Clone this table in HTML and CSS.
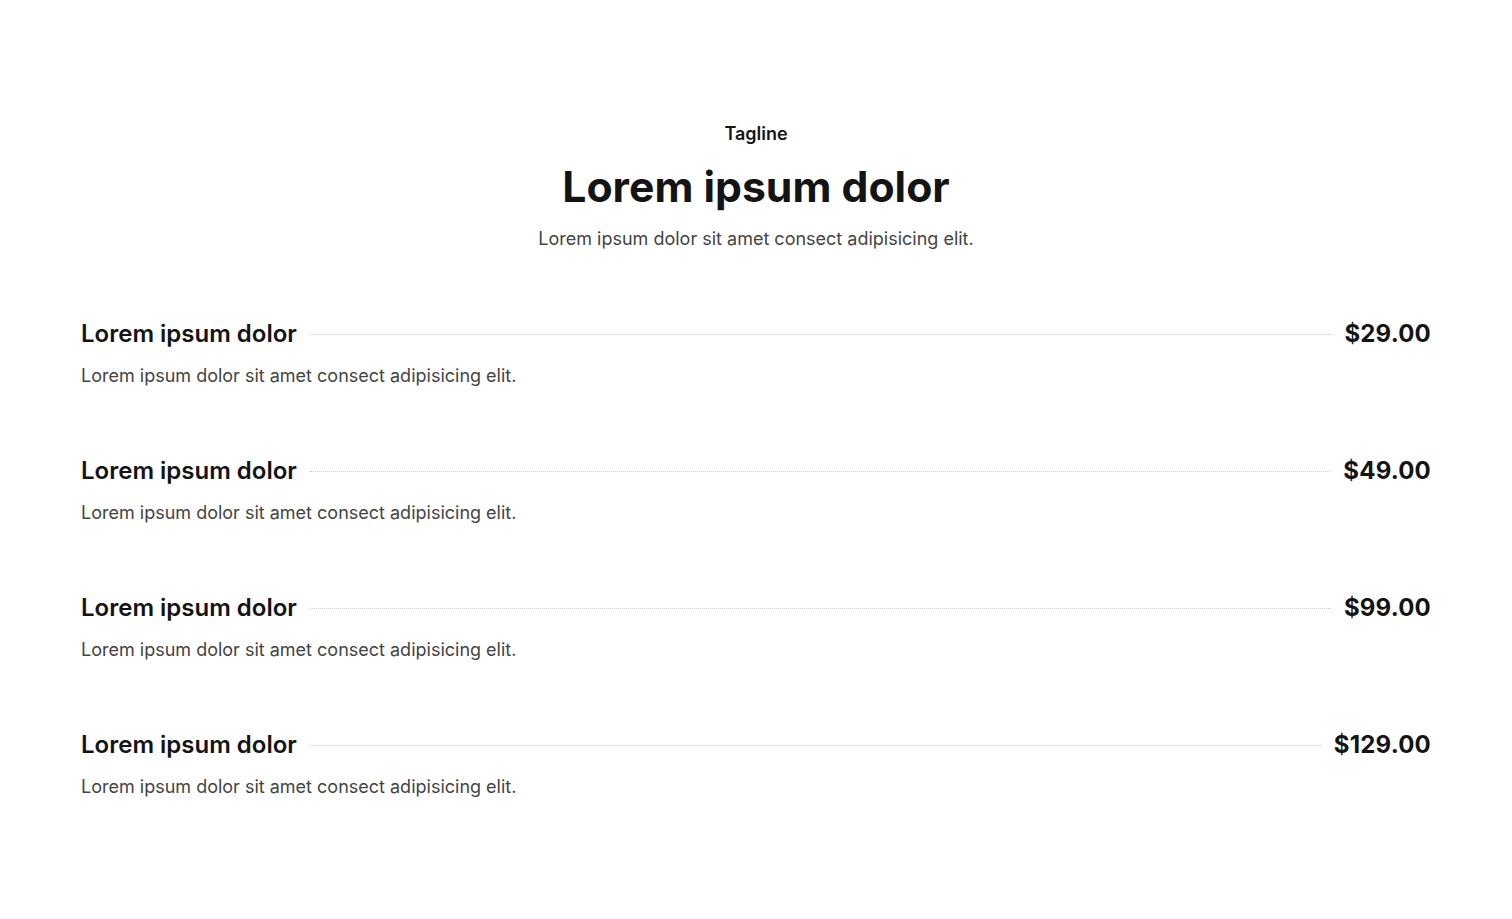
FILE: index.html
```html
<!DOCTYPE html>
<html lang="en">
<head>
    <meta charset="UTF-8">
    <meta name="viewport" content="width=device-width, initial-scale=1.0">
    <title>Pricing List</title>
    <link rel="stylesheet" href="styles.css">
</head>
<body>
    <section class="pricing">
        <div class="pricing-header">
            <p class="tagline">Tagline</p>
            <h1>Lorem ipsum dolor</h1>
            <p class="subtitle">Lorem ipsum dolor sit amet consect adipisicing elit.</p>
        </div>

        <div class="price-list">
            <div class="price-item">
                <div class="price-row">
                    <h3>Lorem ipsum dolor</h3>
                    <span class="dots"></span>
                    <span class="price">$29.00</span>
                </div>
                <p>Lorem ipsum dolor sit amet consect adipisicing elit.</p>
            </div>
            <div class="price-item">
                <div class="price-row">
                    <h3>Lorem ipsum dolor</h3>
                    <span class="dots"></span>
                    <span class="price">$49.00</span>
                </div>
                <p>Lorem ipsum dolor sit amet consect adipisicing elit.</p>
            </div>
            <div class="price-item">
                <div class="price-row">
                    <h3>Lorem ipsum dolor</h3>
                    <span class="dots"></span>
                    <span class="price">$99.00</span>
                </div>
                <p>Lorem ipsum dolor sit amet consect adipisicing elit.</p>
            </div>
            <div class="price-item">
                <div class="price-row">
                    <h3>Lorem ipsum dolor</h3>
                    <span class="dots"></span>
                    <span class="price">$129.00</span>
                </div>
                <p>Lorem ipsum dolor sit amet consect adipisicing elit.</p>
            </div>
        </div>
    </section>
</body>
</html>
```

FILE: styles.css
```css
body {
    font-family: Inter, "Noto Sans", sans-serif;
    margin: 0;
    background: #fff;
    color: #141414;
}
.pricing {
    padding: 120px 81px 80px;
}
.pricing-header {
    text-align: center;
    margin-bottom: 65px;
}
.tagline {
    font-size: 18px;
    font-weight: 600;
    line-height: 28px;
    margin: 0 0 15px;
}
.pricing-header h1 {
    font-size: 42.7px;
    font-weight: 700;
    line-height: 48px;
    margin: 0 0 14px;
}
.subtitle {
    font-size: 18px;
    line-height: 28px;
    margin: 0;
    color: #444;
}
.price-list {
    display: flex;
    flex-direction: column;
    gap: 65px;
}
.price-row {
    display: flex;
    align-items: center;
    gap: 13px;
}
.price-row h3 {
    margin: 0;
    font-size: 24px;
    font-weight: 600;
    line-height: 32px;
}
.dots {
    flex: 1;
    border-top: 1px dotted #c8c8c8;
}
.price {
    font-size: 24px;
    font-weight: 700;
    line-height: 32px;
    letter-spacing: 0.2px;
}
.price-item p {
    margin: 12px 0 0;
    font-size: 18px;
    line-height: 28px;
    color: #444;
}
```
